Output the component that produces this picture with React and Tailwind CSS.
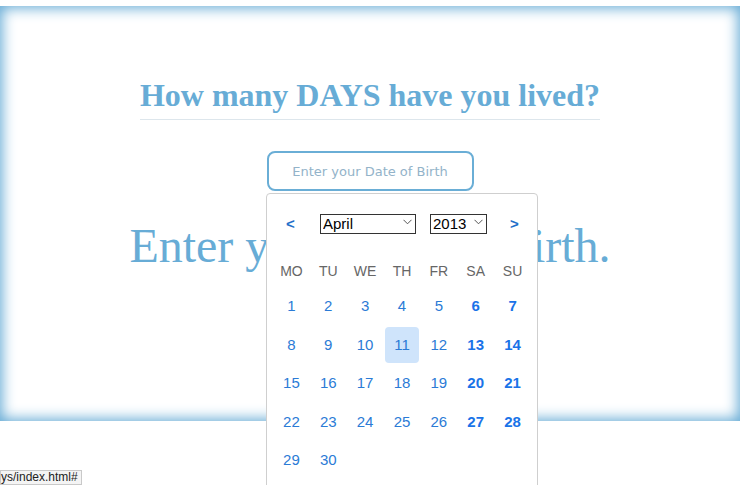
import React from "react";

const WEEK = ["MO", "TU", "WE", "TH", "FR", "SA", "SU"];
const DAYS = [
  [1, 2, 3, 4, 5, 6, 7],
  [8, 9, 10, 11, 12, 13, 14],
  [15, 16, 17, 18, 19, 20, 21],
  [22, 23, 24, 25, 26, 27, 28],
  [29, 30, null, null, null, null, null],
];

function Chevron() {
  return (
    <svg width="9" height="6" viewBox="0 0 9 6" className="absolute right-[4px] top-[7px] pointer-events-none">
      <path d="M0.5 0.8 L4.5 4.8 L8.5 0.8" fill="none" stroke="#555" strokeWidth="1" />
    </svg>
  );
}

function Picker({ value, options, width }) {
  return (
    <div className="relative" style={{ width }}>
      <select defaultValue={value}
        className="appearance-none w-full h-[20px] border border-[#333] text-[15px] leading-[18px] text-black bg-white pl-[2px] pr-[14px]">
        {options.map(o => <option key={o}>{o}</option>)}
      </select>
      <Chevron />
    </div>
  );
}

function Calendar() {
  return (
    <div className="absolute left-[266px] top-[193px] w-[272px] h-[310px] bg-white border border-[#cfcfcf] rounded-[4px] font-['Liberation_Sans',Arial,sans-serif]">
      <div className="flex items-center h-[20px] mt-[20px] pl-[19px]">
        <span className="w-[34px] text-[15px] font-bold text-[#1f6fc9]">&lt;</span>
        <Picker value="April" width={96}
          options={["January","February","March","April","May","June","July","August","September","October","November","December"]} />
        <div className="w-[14px]" />
        <Picker value="2013" width={57} options={["2011","2012","2013","2014"]} />
        <span className="ml-[23px] text-[15px] font-bold text-[#1f6fc9]">&gt;</span>
      </div>

      <div className="grid grid-cols-7 px-[6px] mt-[21px]">
        {WEEK.map(w => (
          <div key={w} className="h-[32px] flex items-center justify-center text-[14px] text-[#666]">{w}</div>
        ))}
        {DAYS.flat().map((d, i) => {
          const weekend = i % 7 >= 5;
          return (
            <div key={i} className="h-[38.5px] flex items-center justify-center">
              {d && (
                <span className={"w-[34px] h-[36px] flex items-center justify-center rounded-[4px] text-[15px] " +
                  (d === 11 ? "bg-[#cfe4fb] " : "") +
                  (weekend ? "font-bold text-[#1a73e8]" : "text-[#2b7bd6]")}>
                  {d}
                </span>
              )}
            </div>
          );
        })}
      </div>
    </div>
  );
}

export default function App() {
  return (
    <div className="relative w-[744px] h-[485px] overflow-hidden bg-white">
      <div className="mt-[6px] w-[740px] h-[415px] shadow-[inset_0_0_14px_2px_#62a9d4] flex flex-col items-center">
        <h1 className="mt-[70px] inline-block pb-[5px] border-b border-[#dde6ec] text-[32px] leading-[38px] font-bold text-[#67acd6] font-['Liberation_Serif','Times_New_Roman',serif]">
          How many DAYS have you lived?
        </h1>
        <input
          placeholder="Enter your Date of Birth"
          className="mt-[31px] w-[207px] h-[40px] rounded-[8px] border-2 border-[#6aaed6] text-center text-[13px] font-['DejaVu_Sans',Tahoma,sans-serif] placeholder:text-[#93b3c9] outline-none"
        />
        <div className="mt-[27px] text-[48px] leading-[56px] text-[#67acd6] font-['Liberation_Serif','Times_New_Roman',serif]">
          Enter your Date of Birth.
        </div>
      </div>

      <Calendar />

      <div className="absolute left-0 bottom-0 h-[15px] pr-[3px] border border-[#c9c9c9] bg-[#f4f4f4] text-[12px] leading-[13px] text-[#222] font-['Liberation_Sans',sans-serif]">
        ys/index.html#
      </div>
    </div>
  );
}
